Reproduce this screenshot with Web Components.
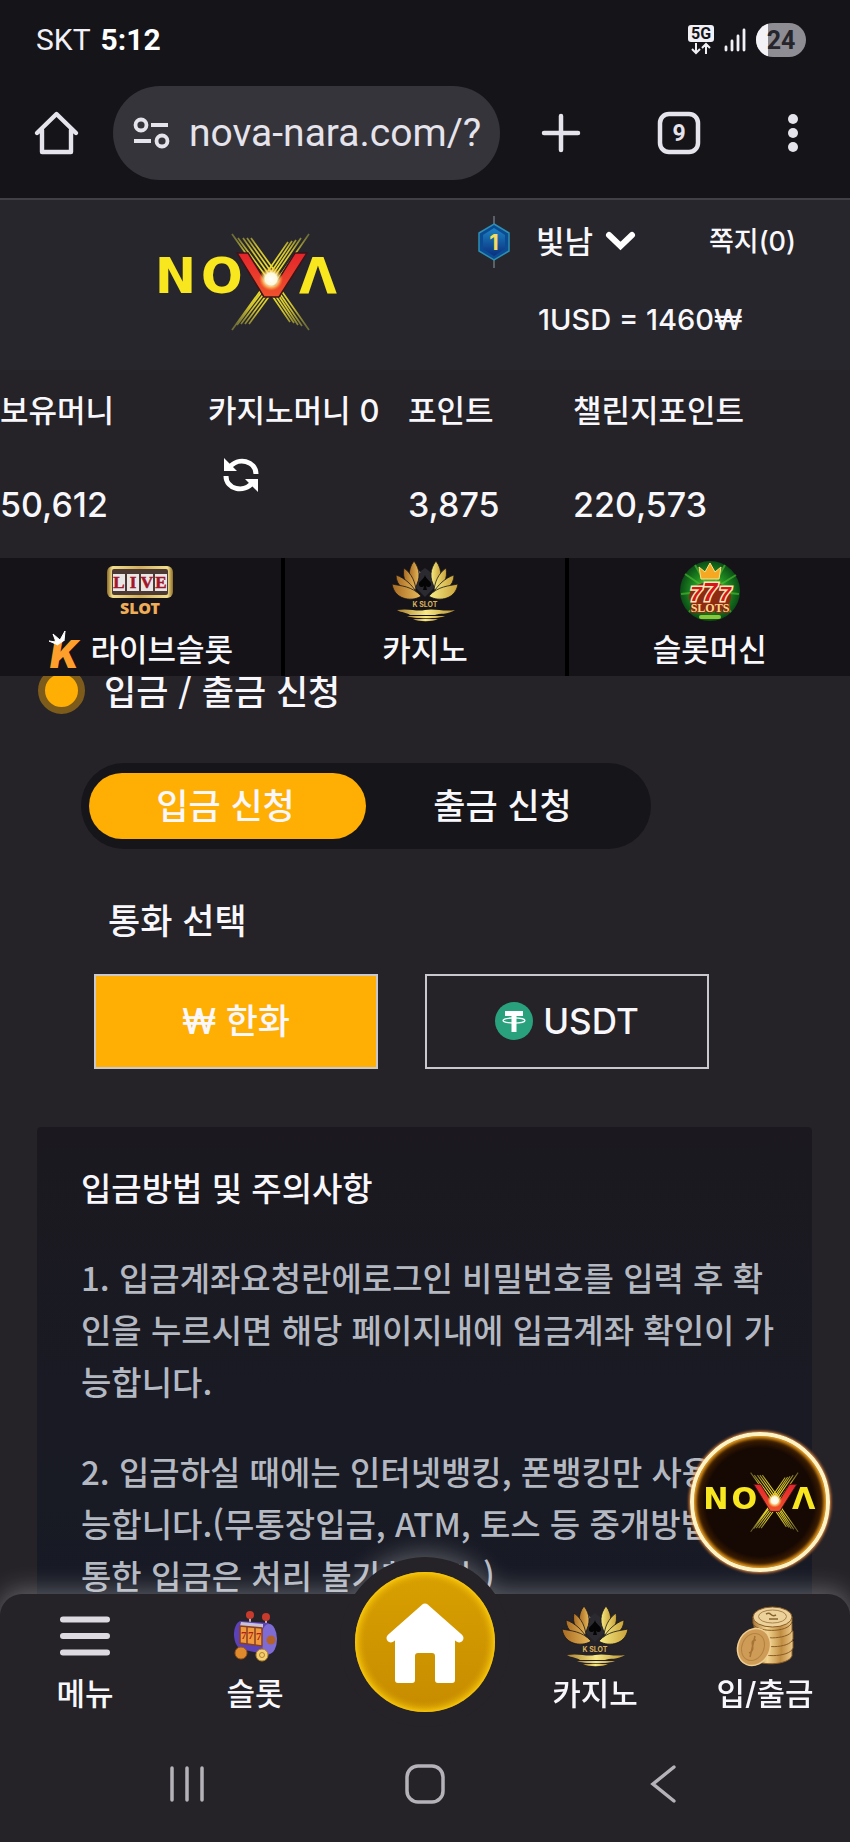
<!DOCTYPE html>
<html lang="ko">
<head>
<meta charset="utf-8">
<meta name="viewport" content="width=device-width, initial-scale=1">
<title>NOVA</title>
<style>
  html { background: #252228; }
  body {
    margin: 0;
    min-height: 100vh;
    background: #252228;
    color: #f8f7fb;
    font-family: Inter, "Noto Sans CJK KR", sans-serif;
    font-weight: 500;
    --gold: #ffae04;
    --ink: #151419;
    --korean: "Noto Sans CJK KR", sans-serif;
  }
</style>
</head>
<body>
<nova-app></nova-app>
<script>
const RESET = `
  *, *::before, *::after { box-sizing: border-box; }
  :host { display: block; }
  button, input { font: inherit; color: inherit; background: none; border: 0; padding: 0; margin: 0; }
  a { color: inherit; text-decoration: none; }
  h1, h2, p, dl, dt, dd { margin: 0; font-weight: 500; }
  svg { display: block; flex: none; overflow: visible; }
`;

function define(name, css, html) {
  const template = document.createElement('template');
  template.innerHTML = `<style>${RESET}${css}</style>${html}`;
  customElements.define(name, class extends HTMLElement {
    constructor() {
      super();
      this.attachShadow({ mode: 'open' }).append(template.content.cloneNode(true));
    }
  });
}

/* ---------- brand marks ---------- */

define('nova-logo', `
  svg { width: 100%; height: auto; }
  text { font: 700 49px "DejaVu Sans", sans-serif; fill: #f8e71f; }
`, `
  <svg viewBox="0 0 180 98" role="img" aria-label="NOVA">
    <defs>
      <radialGradient id="beam" gradientUnits="userSpaceOnUse" cx="113" cy="47" r="58">
        <stop offset="0" stop-color="#fff12a"/><stop offset=".6" stop-color="#cdbf2c"/><stop offset="1" stop-color="#8b8a3c" stop-opacity=".7"/>
      </radialGradient>
      <radialGradient id="spark">
        <stop offset="0" stop-color="#fff"/><stop offset=".5" stop-color="#fff8d8"/><stop offset=".75" stop-color="#ffd060" stop-opacity=".6"/><stop offset="1" stop-color="#ff9a20" stop-opacity="0"/>
      </radialGradient>
      <linearGradient id="red" gradientUnits="userSpaceOnUse" x1="0" y1="20" x2="0" y2="64">
        <stop offset="0" stop-color="#e3242b"/><stop offset="1" stop-color="#f0522c"/>
      </linearGradient>
    </defs>
    <g stroke="url(#beam)" stroke-width="1.7" fill="none">
      <path d="M74 1 L109 50 M80 5 L110 46 M85 5 L112 43 M89 5 L114 40 M93 5 L116 37"/>
      <path d="M151 1 L117 50 M143 5 L115 46 M138 7 L113 44 M134 8 L112 41 M130 9 L110 38"/>
      <path d="M74 97 L108 50 M79 92 L109 52 M83 91 L111 54 M87 91 L113 56 M91 91 L115 58"/>
      <path d="M151 97 L118 50 M144 93 L116 52 M140 92 L115 54 M136 90 L113 56 M132 89 L111 58"/>
    </g>
    <text x="-3" y="60">N</text>
    <text x="43" y="60">O</text>
    <text x="141" y="60">Λ</text>
    <path d="M79 20 H90 L110 52 H117 L137 20 H149 L121 64 H106Z" fill="url(#red)" stroke="#3b1518" stroke-width="1.5"/>
    <circle cx="113" cy="46" r="12" fill="url(#spark)"/>
  </svg>
`);

define('lotus-icon', `svg { width: 100%; height: 100%; } text { font: 700 7px Inter, sans-serif; fill: #d9b15a; }`, `
  <svg viewBox="0 0 66 60" aria-hidden="true">
    <defs>
      <linearGradient id="l" x1="0" x2="1"><stop offset="0" stop-color="#a86a22"/><stop offset="1" stop-color="#e7b95a"/></linearGradient>
      <linearGradient id="r" x1="0" x2="1"><stop offset="0" stop-color="#f6ec84"/><stop offset="1" stop-color="#c9a038"/></linearGradient>
      <linearGradient id="w" x1="0" x2="1"><stop offset="0" stop-color="#a97f2d"/><stop offset=".5" stop-color="#f8ea86"/><stop offset="1" stop-color="#b8902f"/></linearGradient>
    </defs>
    <path d="M33 7 C25 12 21 19 24 27 L33 36 L42 27 C45 19 41 12 33 7Z" fill="#2b2a30"/>
    <path d="M33 14 C32 19 26 20 27 24 C28 27 31 26 32 25 L31 29 H35 L34 25 C35 26 38 27 39 24 C40 20 34 19 33 14Z" fill="#050506"/>
    <path d="M28 12 C26 9 24 9 24 14" stroke="#77757c" stroke-width="1.5" fill="none"/>
    <g fill="url(#l)" stroke="#171519" stroke-width=".8">
      <path d="M22 0 C28 8 29 17 23 27 C16 20 15 9 22 0Z"/>
      <path d="M12 7 C20 13 23 21 24 29 C14 26 10 17 12 7Z"/>
      <path d="M4 14 C13 17 20 24 25 32 C14 32 4 25 4 14Z"/>
      <path d="M0 23 C9 25 20 25 29 35 C23 40 3 41 0 23Z"/>
    </g>
    <g fill="url(#r)" stroke="#171519" stroke-width=".8">
      <path d="M44 0 C38 8 37 17 43 27 C50 20 51 9 44 0Z"/>
      <path d="M54 7 C46 13 43 21 42 29 C52 26 56 17 54 7Z"/>
      <path d="M62 14 C53 17 46 24 41 32 C52 32 62 25 62 14Z"/>
      <path d="M66 23 C57 25 46 25 37 35 C43 40 63 41 66 23Z"/>
    </g>
    <text x="33" y="46" text-anchor="middle">K SLOT</text>
    <g fill="url(#w)">
      <path d="M5 49 C18 47 24 51 33 49 C43 47 51 51 63 49 C56 54 47 52 43 54 H18 C14 51 10 52 5 49Z"/>
      <path d="M15 55 H53 C48 58 20 58 15 55Z"/>
      <path d="M21 58 H46 C41 61 26 61 21 58Z"/>
    </g>
  </svg>
`);

/* ---------- phone and browser chrome ---------- */

define('status-bar', `
  :host { display: flex; align-items: center; justify-content: space-between; height: 80px; padding: 0 44px 0 36px; background: var(--ink); font: 400 30px/40px Roboto, sans-serif; color: #f1f0f6; }
  b { font-weight: 700; color: #fff; margin-left: 10px; }
  .left { display: flex; }
  .icons { display: flex; align-items: center; gap: 10px; }
  text { font-family: Roboto, sans-serif; font-weight: 700; }
`, `
  <div class="left"><span>SKT</span><b>5:12</b></div>
  <div class="icons">
    <svg width="26" height="30" viewBox="0 0 26 30" role="img" aria-label="5G">
      <rect width="26" height="17" rx="3" fill="#f1f0f6"/>
      <text x="13" y="14" font-size="16" text-anchor="middle" fill="#151419">5G</text>
      <path d="M8 18 V28 M4 24 L8 28 L12 24 M18 29 V19 M14 23 L18 19 L22 23" stroke="#f1f0f6" stroke-width="2" fill="none"/>
    </svg>
    <svg width="22" height="24" viewBox="0 0 22 24" aria-hidden="true"><path d="M2 19 V22 M8 13 V22 M14 8 V22 M20 2 V22" stroke="#f1f0f6" stroke-width="2.8" stroke-linecap="round"/></svg>
    <svg width="50" height="34" viewBox="0 0 50 34" role="img" aria-label="24">
      <defs><clipPath id="b"><rect width="50" height="34" rx="17"/></clipPath></defs>
      <g clip-path="url(#b)"><rect width="50" height="34" fill="#8e8d94"/><rect width="12" height="34" fill="#f3f2f7"/></g>
      <text x="25" y="26" font-size="25" text-anchor="middle" fill="#26252b">24</text>
    </svg>
  </div>
`);

define('browser-bar', `
  :host { display: flex; align-items: center; height: 120px; padding: 0 50px 12px 34px; background: var(--ink); border-bottom: 2px solid #414046; color: #e5e3eb; }
  .address { display: flex; align-items: center; gap: 20px; flex: 1; min-width: 0; height: 94px; margin: 0 42px 0 34px; padding: 0 8px 0 20px; border-radius: 47px; background: #35343a; }
  input { flex: 1; min-width: 0; width: 0; outline: 0; font: 400 39px/48px Roboto, sans-serif; }
  .tools { display: flex; align-items: center; justify-content: space-between; flex: 0 0 258px; }
`, `
  <button aria-label="홈"><svg width="45" height="46" viewBox="0 0 45 46" fill="none" stroke="#e5e3eb" stroke-width="4.4" stroke-linejoin="round" stroke-linecap="round"><path d="M3 23 L22.500 4 L42 23 M8 20 V42 H37 V20"/></svg></button>
  <div class="address">
    <svg width="36" height="32" viewBox="0 0 36 32" fill="none" stroke="#e5e3eb" stroke-width="3.800"><circle cx="8" cy="8" r="5.500"/><path d="M18 8 H35 M1 24 H18"/><circle cx="29" cy="24" r="5.500"/></svg>
    <input type="text" value="nova-nara.com/?" aria-label="주소">
  </div>
  <div class="tools">
    <button aria-label="새 탭"><svg width="38" height="38" viewBox="0 0 38 38" stroke="#e5e3eb" stroke-width="4.500" stroke-linecap="round"><path d="M19 2 V36 M2 19 H36"/></svg></button>
    <button aria-label="탭 9개"><svg width="44" height="44" viewBox="0 0 44 44"><rect x="3" y="3" width="38" height="38" rx="9" fill="none" stroke="#e5e3eb" stroke-width="4.500"/><text x="22" y="30" text-anchor="middle" font-family="Roboto" font-weight="700" font-size="23" fill="#e5e3eb">9</text></svg></button>
    <button aria-label="더보기"><svg width="22" height="40" viewBox="0 0 22 40" fill="#e5e3eb"><circle cx="15" cy="6" r="5"/><circle cx="15" cy="20" r="5"/><circle cx="15" cy="34" r="5"/></svg></button>
  </div>
`);

/* ---------- site header ---------- */

define('site-header', `
  :host { display: grid; grid-template-columns: 56fr 44fr; height: 170px; background: #27262c; }
  .brand { place-self: start center; width: 180px; margin: 33px 0 0 20px; }
  .account { padding: 16px 54px 0 2px; }
  .row { display: flex; align-items: center; justify-content: space-between; height: 52px; }
  .user { display: flex; align-items: center; }
  .name { margin: 0 12px 0 26px; font-size: 31px; line-height: 40px; }
  .memo { font-size: 27px; line-height: 40px; }
  .rate { padding: 32px 0 0 60px; font-size: 29px; line-height: 40px; white-space: nowrap; }
`, `
  <a class="brand" href="#"><nova-logo></nova-logo></a>
  <div class="account">
    <div class="row">
      <button class="user">
        <svg width="32" height="52" viewBox="0 0 32 52" role="img" aria-label="1">
          <defs><linearGradient id="g" x1="0" y1="0" x2="0" y2="1"><stop offset="0" stop-color="#1d84c4"/><stop offset="1" stop-color="#0a2f7d"/></linearGradient></defs>
          <path d="M16 0 V52" stroke="#6c747c" stroke-width="1.5"/>
          <path d="M16 8 L31 17 V35 L16 44 L1 35 V17Z" fill="#0b4b93" stroke="#2c8fb4" stroke-width="1.5"/>
          <path d="M16 12 L27 19 V33 L16 40 L5 33 V19Z" fill="url(#g)"/>
          <text x="16" y="34" text-anchor="middle" font-family="Inter" font-weight="700" font-size="22" fill="#f4dc5c">1</text>
        </svg>
        <span class="name">빛남</span>
        <svg width="31" height="20" viewBox="0 0 31 20" fill="none" stroke="#fff" stroke-width="6" stroke-linecap="round"><path d="M4 3 L15.500 14 L27 3"/></svg>
      </button>
      <a class="memo" href="#">쪽지(0)</a>
    </div>
    <p class="rate">1USD = 1460₩</p>
  </div>
`);

define('balance-strip', `
  dl { display: grid; grid-template-columns: 208fr 200fr 165fr 277fr; height: 188px; padding-top: 21px; white-space: nowrap; }
  dt, dd { font-size: 31px; line-height: 40px; }
  dd { margin-top: 54px; font-size: 34px; }
  .casino { display: flex; flex-wrap: wrap; align-content: flex-start; column-gap: 9px; }
  .casino dd { margin: 0; font-size: 31px; }
  .casino button { flex-basis: 100%; margin: 26px 0 0 15px; }
`, `
  <dl>
    <div><dt>보유머니</dt><dd>50,612</dd></div>
    <div class="casino"><dt>카지노머니</dt><dd>0</dd>
      <button aria-label="새로고침"><svg width="36" height="36" viewBox="0 0 36 36"><g fill="none" stroke="#fff" stroke-width="5"><path d="M6 11 C15 -1 33 4 33 17"/><path d="M30 25 C21 37 3 32 3 19"/></g><path d="M1 1 L14 14 H1Z M35 35 L22 22 H35Z" fill="#fff"/></svg></button>
    </div>
    <div><dt>포인트</dt><dd>3,875</dd></div>
    <div><dt>챌린지포인트</dt><dd>220,573</dd></div>
  </dl>
`);

/* ---------- category navigation ---------- */

define('category-tab', `
  :host { flex: 1; border-right: 4px solid #000; }
  :host(:last-child) { border-right: 0; }
  a { display: flex; flex-direction: column; align-items: center; gap: 8px; padding-top: 2px; }
  .icon { display: flex; align-items: center; height: 62px; }
  .label { display: flex; align-items: center; gap: 6px; font-size: 31px; line-height: 40px; white-space: nowrap; }
`, `<a href="#"><span class="icon"><slot name="icon"></slot></span><span class="label"><slot name="mark"></slot><slot></slot></span></a>`);

define('category-nav', `
  :host { position: relative; z-index: 2; background: #151318; }
  nav { display: flex; height: 118px; }
  lotus-icon { width: 66px; height: 60px; }
`, `
  <nav>
    <category-tab>
      <svg slot="icon" width="66" height="50" viewBox="0 0 66 50" role="img" aria-label="LIVE SLOT">
        <defs><linearGradient id="f" x1="0" x2="1"><stop offset="0" stop-color="#8b6a22"/><stop offset=".08" stop-color="#f3de8e"/><stop offset=".5" stop-color="#cfae5c"/><stop offset=".92" stop-color="#f3de8e"/><stop offset="1" stop-color="#8b6a22"/></linearGradient></defs>
        <rect width="66" height="32" rx="6" fill="url(#f)"/>
        <rect x="5" y="3" width="56" height="26" rx="2" fill="#4d3a34"/>
        <g fill="#e9e6e6"><rect x="6" y="8" width="12" height="17"/><rect x="20" y="8" width="12" height="17"/><rect x="34" y="8" width="12" height="17"/><rect x="48" y="8" width="12" height="17"/></g>
        <g font-family="Liberation Serif" font-weight="700" font-size="17" fill="#a3162a" stroke="#a3162a" stroke-width=".5" text-anchor="middle"><text x="12" y="22">L</text><text x="26" y="22">I</text><text x="40" y="22">V</text><text x="54" y="22">E</text></g>
        <text x="33" y="48" text-anchor="middle" font-family="Noto Sans" font-weight="900" font-size="16" fill="#efad58">SLOT</text>
      </svg>
      <svg slot="mark" width="37" height="40" viewBox="0 0 37 40" role="img" aria-label="K">
        <text x="2" y="38" font-family="Inter" font-weight="900" font-style="italic" font-size="38" fill="#ff9f2b">K</text>
        <path d="M10 15 L1 11 L8 12 L5 4 L12 10 L17 1 L16 11" fill="#fff" stroke="#fff" stroke-linejoin="round"/>
      </svg>
      라이브슬롯
    </category-tab>
    <category-tab><lotus-icon slot="icon"></lotus-icon>카지노</category-tab>
    <category-tab>
      <svg slot="icon" width="62" height="62" viewBox="0 0 62 62" role="img" aria-label="777 SLOTS">
        <defs><radialGradient id="n"><stop offset="0" stop-color="#7be03a"/><stop offset=".6" stop-color="#1f8a20"/><stop offset="1" stop-color="#0a4d16"/></radialGradient></defs>
        <circle cx="31" cy="31" r="30" fill="url(#n)"/>
        <g stroke="#54c334" stroke-width="2" opacity=".6"><path d="M31 31 L6 14 M31 31 L16 5 M31 31 L46 5 M31 31 L57 15 M31 31 L60 34 M31 31 L2 34 M31 31 L10 52 M31 31 L52 52"/></g>
        <path d="M22 19 L20 7 L26 12 L31 3 L36 12 L42 7 L40 19Z" fill="#f7a823" stroke="#ffe08a"/>
        <ellipse cx="31" cy="37" rx="21" ry="15" fill="#8d2a12"/>
        <g font-family="Liberation Sans" font-weight="700" font-style="italic" fill="#d51719" stroke="#ffe9b8" stroke-width="3" paint-order="stroke" text-anchor="middle"><text x="17" y="41" font-size="21">7</text><text x="46" y="41" font-size="21">7</text><text x="31" y="41" font-size="26">7</text></g>
        <text x="31" y="52" text-anchor="middle" font-family="Liberation Serif" font-weight="700" font-size="12" fill="#ffd48a" stroke="#8d2a12" stroke-width="2" paint-order="stroke">SLOTS</text>
        <rect x="20" y="55" width="22" height="4" rx="2" fill="#86c83a"/>
      </svg>
      슬롯머신
    </category-tab>
  </nav>
`);

/* ---------- deposit and withdrawal form ---------- */

define('section-title', `
  h1 { display: flex; align-items: center; gap: 19px; padding-left: 38px; font: 500 35px/52px var(--korean); }
  i { width: 47px; height: 47px; border-radius: 50%; background: var(--gold); border: 7px solid #7d5b1a; }
`, `<h1><i></i><slot></slot></h1>`);

define('mode-toggle', `
  :host { display: flex; width: fit-content; max-width: 100%; padding: 10px 8px; border-radius: 43px; background: #16151a; }
  button { width: 277px; min-width: 0; height: 66px; padding: 0 4px 4px 0; border-radius: 33px; font: 500 35px/52px var(--korean); }
  [aria-pressed=true] { background: var(--gold); }
`, `<button aria-pressed="true">입금 신청</button><button aria-pressed="false">출금 신청</button>`);

define('currency-picker', `
  h2 { padding-left: 14px; font: 500 35px/52px var(--korean); }
  .options { display: flex; gap: 47px; margin-top: 29px; }
  button { display: flex; align-items: center; justify-content: center; gap: 10px; width: 284px; height: 95px; padding-bottom: 2px; border: 2px solid #c9c8cc; font-size: 35px; line-height: 52px; }
  [aria-pressed=true] { background: var(--gold); }
`, `
  <h2>통화 선택</h2>
  <div class="options">
    <button aria-pressed="true"><span>₩ 한화</span></button>
    <button aria-pressed="false">
      <svg width="38" height="38" viewBox="0 0 38 38" aria-hidden="true"><circle cx="19" cy="19" r="19" fill="#2aa17d"/><path d="M10 9 H28 V14 H21.500 V30 H16.500 V14 H10Z" fill="#fff"/><ellipse cx="19" cy="18.500" rx="11" ry="2.600" fill="none" stroke="#fff" stroke-width="1.200"/></svg>
      <span>USDT</span>
    </button>
  </div>
`);

define('notice-card', `
  :host { display: flex; flex-direction: column; gap: 38px; padding: 34px 38px 60px 44px; border-radius: 4px; background: linear-gradient(#1b191f, #191a24 55%, #161a24); font: 500 33px/52px var(--korean); color: #b4b8c1; }
  h2 { font-size: 33px; color: #f8f7fb; }
`, `<h2><slot name="title"></slot></h2><slot></slot>`);

/* ---------- overlays ---------- */

define('floating-logo', `
  :host { position: fixed; right: 20px; bottom: 270px; z-index: 3; }
  a { display: grid; place-items: center; width: 140px; height: 140px; border-radius: 50%; border: 4px solid #fff3c4; background: radial-gradient(#160802 58%, #3a1c02 66%, #b86a08 72%); box-shadow: 0 0 3px 1px #f08a3c, inset 0 0 4px 1px #ffb52a; }
  nova-logo { width: 111px; }
`, `<a href="#" aria-label="NOVA"><nova-logo></nova-logo></a>`);

define('dock-item', `
  a { display: flex; flex-direction: column; align-items: center; gap: 8px; font-size: 31px; line-height: 40px; white-space: nowrap; }
  .icon { display: flex; align-items: center; height: 60px; }
`, `<a href="#"><span class="icon"><slot name="icon"></slot></span><slot></slot></a>`);

define('dock-bar', `
  :host { position: fixed; left: 0; right: 0; bottom: 0; z-index: 4; filter: drop-shadow(0 -4px 12px rgba(255, 255, 255, .3)); }
  .bar { border-radius: 22px 22px 0 0; background: #252327; }
  nav { display: grid; grid-template-columns: repeat(5, 1fr); padding: 12px 0; }
  .home { position: relative; justify-self: center; width: 140px; height: 140px; margin: -34px 0 0; }
  .home::before { content: ""; position: absolute; inset: -15px; border-radius: 50%; background: #252327; }
  .home svg { position: relative; }
  lotus-icon { width: 66px; height: 60px; }
  .keys { display: flex; justify-content: center; height: 116px; }
  .keys button { display: grid; place-items: center; flex: 0 1 238px; }
`, `
  <div class="bar">
    <nav>
      <dock-item><svg slot="icon" width="50" height="40" viewBox="0 0 50 40" stroke="#dddbe1" stroke-width="6" stroke-linecap="round"><path d="M3 3.500 H47 M3 20 H47 M3 36.500 H47"/></svg>메뉴</dock-item>
      <dock-item>
        <svg slot="icon" width="46" height="50" viewBox="0 0 46 50" aria-hidden="true">
          <path d="M18 5 V12 M34 7 V14" stroke="#b9b2b4" stroke-width="2"/>
          <circle cx="18" cy="4" r="4" fill="#c73a2c"/><circle cx="34" cy="6" r="4" fill="#c73a2c"/>
          <path d="M8 10 L36 12 C46 16 48 40 36 44 L8 38 C0 32 0 14 8 10Z" fill="#5b42b8"/>
          <ellipse cx="37" cy="28" rx="8" ry="15" fill="#7f6bd4"/><circle cx="39" cy="29" r="4.500" fill="#b5622a"/>
          <path d="M9 11 L31 13 V17 L8 15Z" fill="#c9c1d6"/>
          <path d="M8 15 L30 17 V35 L8 32Z" fill="#ef9a3c" stroke="#8a3f20" stroke-width="1.500"/>
          <path d="M15 16 V33 M23 17 V34" stroke="#8a3f20" stroke-width="1.500"/>
          <g font-family="Liberation Serif" font-weight="700" font-size="11" fill="#b3201b"><text x="9" y="28">7</text><text x="16" y="28">7</text><text x="24" y="29">7</text></g>
          <circle cx="9" cy="42" r="6" fill="#e08a2e" stroke="#9a5418"/><circle cx="30" cy="44" r="6" fill="#f3cf74" stroke="#b5822c"/><circle cx="30" cy="44" r="2.500" fill="none" stroke="#b5822c"/>
        </svg>슬롯</dock-item>
      <a class="home" href="#" aria-label="홈">
        <svg width="140" height="140" viewBox="0 0 140 140">
          <defs><linearGradient id="c" x1="0" y1="0" x2="0" y2="1"><stop offset="0" stop-color="#d9a000"/><stop offset="1" stop-color="#c68c00"/></linearGradient>
          <radialGradient id="d"><stop offset=".84" stop-color="#d19700" stop-opacity="0"/><stop offset="1" stop-color="#ffd00c" stop-opacity=".85"/></radialGradient></defs>
          <circle cx="70" cy="70" r="70" fill="url(#c)"/><circle cx="70" cy="70" r="70" fill="url(#d)"/>
          <path d="M70 36 L104 66 M70 36 L36 66" stroke="#fff" stroke-width="9" stroke-linecap="round"/>
          <path d="M70 34 L100 62 V108 Q100 111 97 111 H83 Q80 111 80 108 V84 Q80 81 77 81 H63 Q60 81 60 84 V108 Q60 111 57 111 H43 Q40 111 40 108 V62Z" fill="#fff"/>
        </svg>
      </a>
      <dock-item><lotus-icon slot="icon"></lotus-icon>카지노</dock-item>
      <dock-item>
        <svg slot="icon" width="58" height="60" viewBox="0 0 58 60" aria-hidden="true">
          <defs><linearGradient id="k" x1="0" x2="1"><stop offset="0" stop-color="#a8783a"/><stop offset=".35" stop-color="#f3d692"/><stop offset=".7" stop-color="#c08d42"/><stop offset="1" stop-color="#ecc98a"/></linearGradient></defs>
          <g fill="url(#k)" stroke="#8a5c26" stroke-width="1">
            <path d="M18 46 V52 C20 60 52 60 56 50 V44Z"/>
            <path d="M18 37 V43 C20 52 54 52 57 42 V35Z"/>
            <path d="M20 28 V34 C22 43 54 43 57 33 V25Z"/>
            <path d="M18 19 V26 C20 34 52 34 56 25 V17Z"/>
            <path d="M17 11 V17 C18 26 52 28 56 16 V11Z"/>
            <ellipse cx="36.500" cy="11" rx="19.500" ry="10" fill="#ecd29a"/>
          </g>
          <ellipse cx="36.500" cy="10.500" rx="14" ry="6.500" fill="none" stroke="#a8824a"/><path d="M30 8 C36 5 34 12 40 9 M33 13 H42" stroke="#87642f" stroke-width="1.500" fill="none"/>
          <ellipse cx="18" cy="41" rx="16" ry="19" transform="rotate(24 18 41)" fill="#cf9c58" stroke="#f0cf93" stroke-width="1.500"/>
          <ellipse cx="17" cy="41" rx="11" ry="14" transform="rotate(24 17 41)" fill="none" stroke="#b5823f"/>
          <path d="M20 34 C11 34 22 44 13 47 M19 30 L14 51" stroke="#a87435" stroke-width="1.500" fill="none"/>
        </svg>입/출금</dock-item>
    </nav>
    <div class="keys">
      <button aria-label="최근 앱"><svg width="36" height="38" viewBox="0 0 36 38" stroke="#b5b3b9" stroke-width="3.500" stroke-linecap="round"><path d="M3 3 V35 M18 3 V35 M33 3 V35"/></svg></button>
      <button aria-label="홈 화면"><svg width="40" height="40" viewBox="0 0 40 40"><rect x="2" y="2" width="36" height="36" rx="11" fill="none" stroke="#b5b3b9" stroke-width="3.500"/></svg></button>
      <button aria-label="뒤로"><svg width="26" height="40" viewBox="0 0 26 40" fill="none" stroke="#b5b3b9" stroke-width="3.500" stroke-linecap="round"><path d="M24 3 L3 20 L24 37"/></svg></button>
    </div>
  </div>
`);

define('nova-app', `
  :host { min-height: 100vh; }
  main { display: flex; flex-direction: column; margin-top: -12px; }
  mode-toggle { margin: 47px 0 0 81px; }
  currency-picker { margin: 44px 0 0 94px; }
  notice-card { margin: 58px 38px 0 37px; }
`, `
  <status-bar></status-bar>
  <browser-bar></browser-bar>
  <site-header></site-header>
  <balance-strip></balance-strip>
  <category-nav></category-nav>
  <main>
    <section-title>입금 / 출금 신청</section-title>
    <mode-toggle></mode-toggle>
    <currency-picker></currency-picker>
    <notice-card>
      <span slot="title">입금방법 및 주의사항</span>
      <p>1. 입금계좌요청란에로그인 비밀번호를 입력 후 확인을 누르시면 해당 페이지내에 입금계좌 확인이 가능합니다.</p>
      <p>2. 입금하실 때에는 인터넷뱅킹, 폰뱅킹만 사용 가능합니다.(무통장입금, ATM, 토스 등 중개방법을 통한 입금은 처리 불가합니다.)</p>
    </notice-card>
  </main>
  <floating-logo></floating-logo>
  <dock-bar></dock-bar>
`);
</script>
</body>
</html>
